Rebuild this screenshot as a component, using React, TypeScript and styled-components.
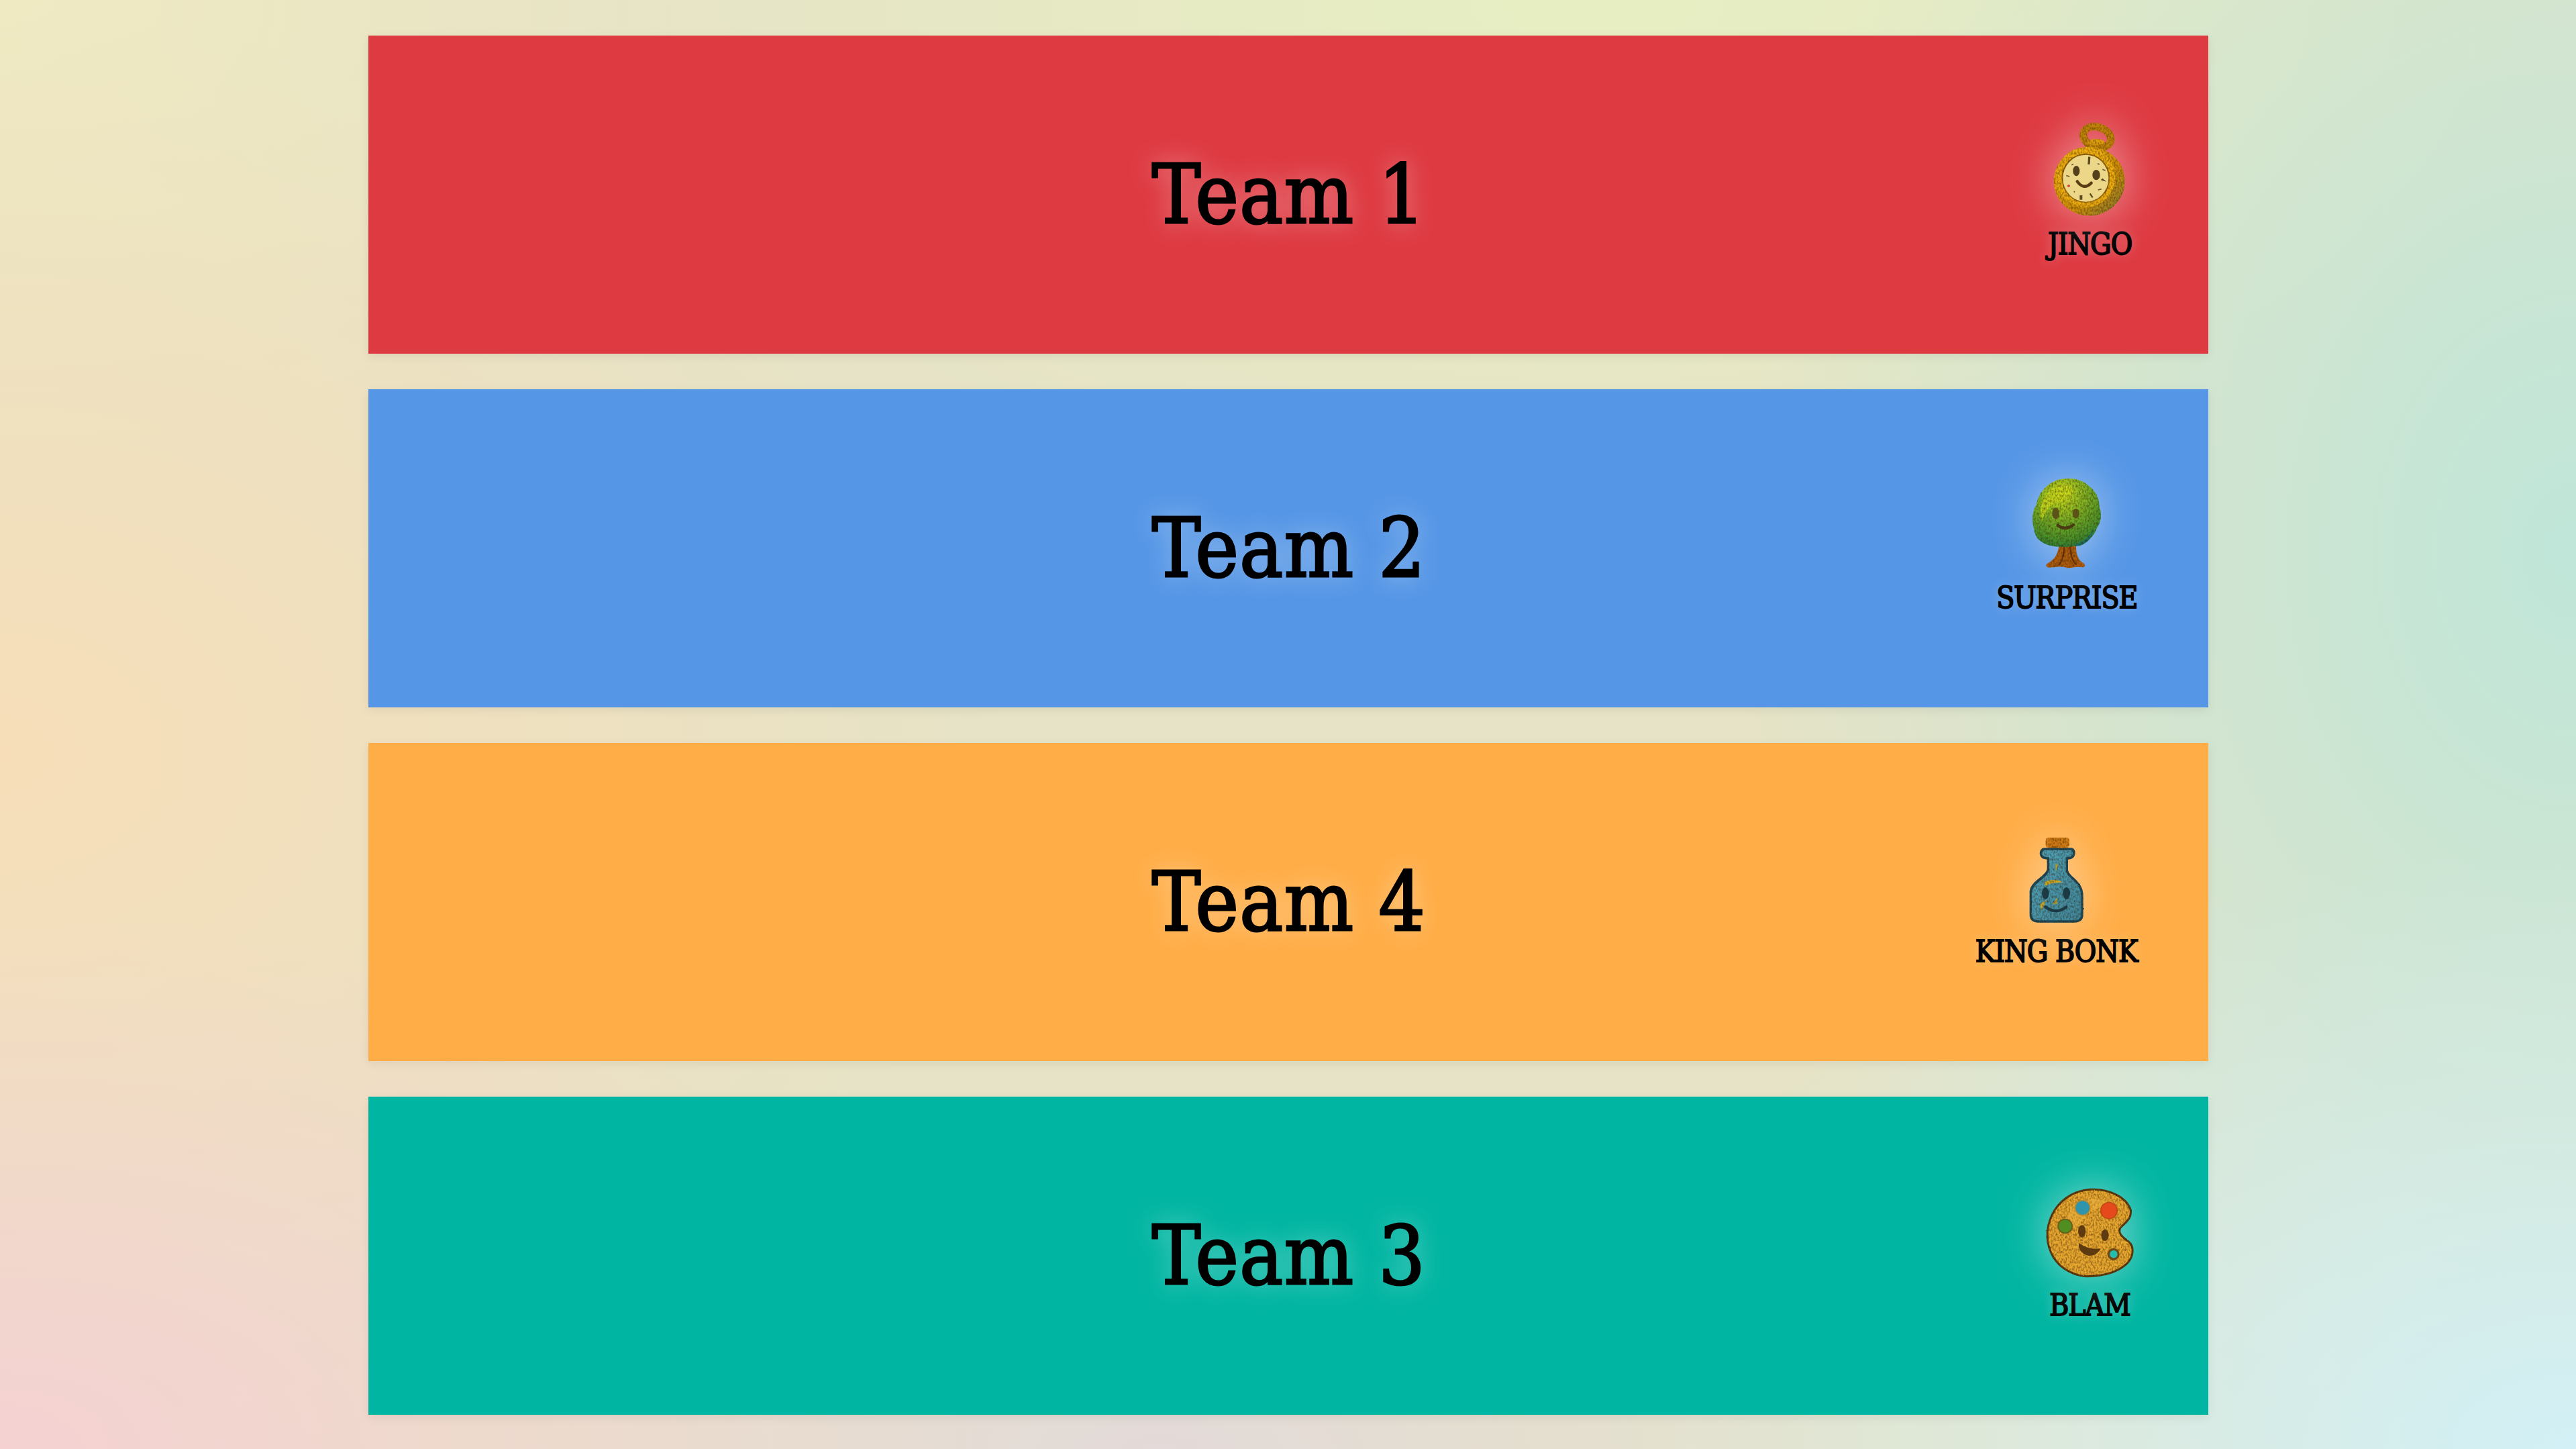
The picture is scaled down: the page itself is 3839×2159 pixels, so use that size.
import React from 'react';
import styled, {createGlobalStyle} from 'styled-components';

const GlobalStyle = createGlobalStyle`
  html, body {
    margin: 0;
    padding: 0;
  }
  body {
    min-height: 100vh;
    font-family: "DejaVu Serif Condensed", "DejaVu Serif", serif;
    color: #000;
    background-color: #e6e3c6;
    background-image:
      radial-gradient(ellipse 1500px 800px at 0% 100%, #f5d1d2 0%, rgba(245, 209, 210, 0) 100%),
      radial-gradient(ellipse 1100px 420px at 45% 100%, #e3dad9 0%, rgba(227, 218, 217, 0) 100%),
      radial-gradient(ellipse 1500px 900px at 100% 100%, #d2f0f6 0%, rgba(210, 240, 246, 0) 100%),
      radial-gradient(ellipse 1250px 1600px at 100% 38%, #bfe6d9 0%, rgba(191, 230, 217, 0) 100%),
      radial-gradient(ellipse 1500px 1100px at 0% 52%, #f7deb9 0%, rgba(247, 222, 185, 0) 100%),
      radial-gradient(ellipse 1100px 700px at 0% 0%, #efeac2 0%, rgba(239, 234, 194, 0) 100%),
      radial-gradient(ellipse 1500px 800px at 62% 0%, #e7efc2 0%, rgba(231, 239, 194, 0) 100%);
  }
`;

const Page = styled.main`
  width: 2742px;
  margin: 0 auto;
  padding: 53px 0;
  display: flex;
  flex-direction: column;
  gap: 53px;
`;

const Card = styled.section<{$bg: string}>`
  height: 474px;
  display: grid;
  grid-template-columns: 1fr auto 1fr;
  align-items: center;
  background: ${p => p.$bg};
  box-shadow: 0 4px 14px rgba(0, 0, 0, 0.07);
`;

const TeamName = styled.h2`
  grid-column: 2;
  margin: 0 0 0 3px;
  font-size: 121px;
  font-weight: 400;
  line-height: 1;
  letter-spacing: 1.5px;
  white-space: nowrap;
  -webkit-text-stroke: 3px #000;
  text-shadow: 0 0 36px rgba(255, 255, 255, 0.5);
`;

const Mascot = styled.div`
  grid-column: 3;
  justify-self: end;
  margin-right: 105px;
  padding-bottom: 21px;
  min-width: 142px;
  display: flex;
  flex-direction: column;
  align-items: center;
`;

const Portrait = styled.div`
  height: 150px;
  display: flex;
  align-items: flex-end;
  justify-content: center;
  filter: drop-shadow(0 0 34px rgba(255, 255, 255, 0.5));
  svg {
    display: block;
    overflow: visible;
  }
`;

const MascotName = styled.span`
  margin-top: 19px;
  font-size: 44px;
  font-weight: 400;
  line-height: 48px;
  letter-spacing: -1px;
  white-space: nowrap;
  -webkit-text-stroke: 1.8px #000;
  text-shadow: 0 0 18px rgba(255, 255, 255, 0.4);
`;

// rough edges + fine paint grain, shared by the four drawings
const Paint: React.FC<{id: string; seed: number}> = ({id, seed}) => (
  <defs>
    <filter id={id} x="-10%" y="-10%" width="120%" height="120%" colorInterpolationFilters="sRGB">
      <feTurbulence type="fractalNoise" baseFrequency="0.04" numOctaves="2" seed={seed} result="edge" />
      <feDisplacementMap in="SourceGraphic" in2="edge" scale="5" xChannelSelector="R" yChannelSelector="G" result="rough" />
      <feTurbulence type="fractalNoise" baseFrequency="0.14 0.09" numOctaves="3" seed={seed + 3} result="grain" />
      <feColorMatrix
        in="grain"
        type="matrix"
        values="0 0 0 0 0.2  0 0 0 0 0.1  0 0 0 0 0  1.1 0 0 0 -0.42"
        result="dark"
      />
      <feComposite in="dark" in2="rough" operator="in" result="darkIn" />
      <feMerge>
        <feMergeNode in="rough" />
        <feMergeNode in="darkIn" />
      </feMerge>
    </filter>
  </defs>
);

const Watch = () => (
  <svg width="122" height="142.3" viewBox="452 90 366 427">
    <Paint id="watch" seed={4} />
    <defs>
      <linearGradient id="watchGold" x1="0.1" y1="0.1" x2="0.9" y2="0.95">
        <stop offset="0" stopColor="#efae10" />
        <stop offset="0.6" stopColor="#cf8f08" />
        <stop offset="1" stopColor="#8f7c2c" />
      </linearGradient>
    </defs>
    <g filter="url(#watch)">
      <ellipse cx="666" cy="166" rx="63" ry="45" fill="none" stroke="#c08309" strokeWidth="34" transform="rotate(18 666 166)" />
      <ellipse cx="662" cy="188" rx="36" ry="14" fill="#e0a00e" />
      <ellipse cx="631" cy="363" rx="159" ry="154" fill="url(#watchGold)" />
      <ellipse cx="615" cy="345" rx="132" ry="134" fill="#eeae10" />
      <ellipse cx="615" cy="349" rx="108" ry="110" fill="#9a6a0a" />
    </g>
    <ellipse cx="615" cy="350" rx="102" ry="105" fill="#ecd688" />
    <ellipse cx="573" cy="317" rx="15" ry="23" fill="#54401a" />
    <ellipse cx="662" cy="335" rx="17" ry="23" fill="#54401a" />
    <path d="M577 364 Q606 405 640 371" fill="none" stroke="#5a3d12" strokeWidth="13" strokeLinecap="round" />
    <path d="M631 254 L629 288" stroke="#5c4a20" strokeWidth="10" />
    <path d="M682 358 L708 365 L690 350 Z" fill="#54401a" />
    <path d="M594 426 L594 446" stroke="#5c4a20" strokeWidth="12" />
    <path d="M634 418 L646 436" stroke="#5c4a20" strokeWidth="7" />
    <circle cx="539" cy="384" r="6" fill="#d8443a" />
    <path d="M528 338 L543 342 M552 290 L560 286 M690 310 L703 316 M670 402 L685 398 M562 408 L566 412 M668 284 L676 288" stroke="#6a5830" strokeWidth="5" />
  </svg>
);

const Tree = () => (
  <svg width="116" height="141.7" viewBox="372 50 348 425">
    <Paint id="tree" seed={11} />
    <defs>
      <radialGradient id="crown" cx="0.42" cy="0.22" r="0.85">
        <stop offset="0" stopColor="#c9da1c" />
        <stop offset="0.4" stopColor="#82b424" />
        <stop offset="0.8" stopColor="#46902a" />
        <stop offset="1" stopColor="#1f6f3f" />
      </radialGradient>
    </defs>
    <g filter="url(#tree)">
      <path
        d="M512 368 C506 410 494 432 458 452 C448 462 458 472 480 468 C504 466 524 462 546 470 C566 474 586 462 618 468 C634 466 628 450 612 444 C594 428 586 400 588 362 Z"
        fill="#ac5c10"
      />
      <path d="M536 370 C534 410 528 440 510 458 M562 370 C562 410 570 440 590 456" stroke="#6f3507" strokeWidth="7" fill="none" />
      <path
        d="M520 74 C570 66 610 74 640 100 C672 122 694 160 692 198 C704 228 700 266 682 290 C668 330 632 368 584 372 C550 380 510 378 476 372 C432 362 402 336 400 296 C388 262 392 214 410 190 C420 132 466 84 520 74 Z"
        fill="url(#crown)"
      />
      <path d="M580 366 C620 356 652 328 668 292 C660 340 630 372 584 374 Z" fill="#1c7560" />
      <path d="M450 150 C480 100 540 90 570 110 C590 150 540 170 500 180 C470 190 450 220 436 260 C420 220 430 180 450 150 Z" fill="#c4d81c" opacity="0.8" />
    </g>
    <ellipse cx="497" cy="227" rx="16" ry="25" fill="#5a5216" />
    <ellipse cx="587" cy="227" rx="15" ry="22" fill="#5a5216" />
    <path d="M506 280 Q540 306 576 278" fill="none" stroke="#4a3a12" strokeWidth="13" strokeLinecap="round" />
  </svg>
);

const Bottle = () => (
  <svg width="90" height="131" viewBox="358 62 270 393">
    <Paint id="bottle" seed={23} />
    <defs>
      <linearGradient id="glass" x1="0" y1="0" x2="1" y2="1">
        <stop offset="0" stopColor="#4fa3ba" />
        <stop offset="1" stopColor="#3f879b" />
      </linearGradient>
    </defs>
    <g filter="url(#bottle)">
      <rect x="444" y="74" width="106" height="46" rx="14" fill="#cf7a14" />
      <path
        d="M436 120 L560 120 C582 124 582 164 556 170 L544 172 L544 220 C552 250 612 270 612 330 L612 420 C612 444 596 454 572 454 L412 454 C388 454 372 444 372 420 L372 320 C372 270 440 250 450 216 L450 172 L438 170 C410 164 412 124 436 120 Z"
        fill="#1f4a5a"
      />
      <path
        d="M440 130 L556 130 C570 134 568 156 552 160 L534 162 L534 224 C544 258 602 276 602 332 L602 416 C602 434 590 444 570 444 L414 444 C394 444 382 434 382 416 L382 324 C382 278 450 258 460 220 L460 162 L442 160 C424 156 424 134 440 130 Z"
        fill="url(#glass)"
      />
      <path d="M440 272 C470 258 510 262 520 276 C490 272 464 280 440 290 Z" fill="#c4a52a" />
      <path d="M418 372 L446 352 L436 380 L424 400 Z M474 370 L496 342 L494 372 Z M486 190 L500 196 L490 226 Z" fill="#b9a532" />
    </g>
    <ellipse cx="443" cy="323" rx="16" ry="27" fill="#1b3a44" />
    <ellipse cx="537" cy="323" rx="16" ry="27" fill="#1b3a44" />
    <path d="M443 384 Q490 420 536 384" fill="none" stroke="#1b3a44" strokeWidth="13" strokeLinecap="round" />
  </svg>
);

const Palette = () => (
  <svg width="135" height="134" viewBox="435 45 405 402">
    <Paint id="palette" seed={31} />
    <g filter="url(#palette)">
      <path
        d="M640 58 C720 54 800 90 820 150 C826 190 790 210 772 232 C762 256 790 276 812 292 C838 316 832 360 804 388 C760 430 690 446 620 446 C550 440 490 400 464 340 C436 280 444 210 480 150 C520 90 580 62 640 58 Z"
        fill="#e8a830"
        stroke="#5e3c10"
        strokeWidth="9"
      />
    </g>
    <path d="M560 130 C600 90 700 90 770 140 C720 130 640 130 600 200 C570 250 500 240 560 130 Z" fill="#eeb440" opacity="0.45" />
    <circle cx="605" cy="140" r="36" fill="#b98a2c" />
    <circle cx="605" cy="140" r="31" fill="#2f95ad" />
    <circle cx="723" cy="152" r="39" fill="#bf4a12" />
    <circle cx="723" cy="152" r="34" fill="#e6491b" />
    <circle cx="527" cy="222" r="34" fill="#6b5a1a" />
    <circle cx="527" cy="222" r="29" fill="#4f8f21" />
    <ellipse cx="602" cy="245" rx="17" ry="28" fill="#5e3a10" />
    <ellipse cx="705" cy="262" rx="17" ry="26" fill="#5e3a10" />
    <path d="M590 298 C620 320 650 326 686 322 C670 352 640 362 615 348 C596 338 582 318 590 298 Z" fill="#5e3a10" />
    <circle cx="743" cy="347" r="27" fill="#6e4a16" />
    <circle cx="744" cy="347" r="17" fill="#25bdaf" />
  </svg>
);

const teams = [
  {name: 'Team 1', bg: '#de3a42', mascot: 'JINGO', art: <Watch />},
  {name: 'Team 2', bg: '#5596e6', mascot: 'SURPRISE', art: <Tree />},
  {name: 'Team 4', bg: '#ffad46', mascot: 'KING BONK', art: <Bottle />},
  {name: 'Team 3', bg: '#00b5a2', mascot: 'BLAM', art: <Palette />},
];

export default function App() {
  return (
    <>
      <GlobalStyle />
      <Page>
        {teams.map(t => (
          <Card key={t.name} $bg={t.bg}>
            <TeamName>{t.name}</TeamName>
            <Mascot>
              <Portrait>{t.art}</Portrait>
              <MascotName>{t.mascot}</MascotName>
            </Mascot>
          </Card>
        ))}
      </Page>
    </>
  );
}
